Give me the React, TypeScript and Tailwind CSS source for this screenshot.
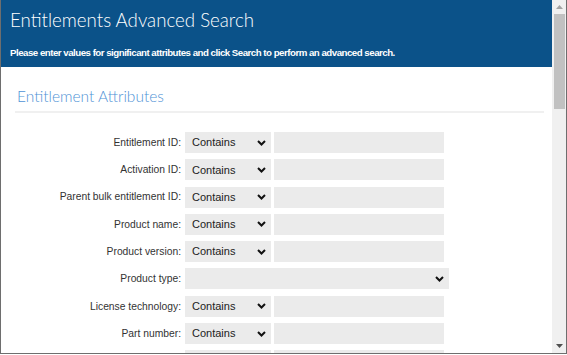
import React from "react"

const rows: { label: string; kind: "match" | "select" }[] = [
  { label: "Entitlement ID:", kind: "match" },
  { label: "Activation ID:", kind: "match" },
  { label: "Parent bulk entitlement ID:", kind: "match" },
  { label: "Product name:", kind: "match" },
  { label: "Product version:", kind: "match" },
  { label: "Product type:", kind: "select" },
  { label: "License technology:", kind: "match" },
  { label: "Part number:", kind: "match" },
]

function Chevron() {
  return (
    <svg width="9" height="6" viewBox="0 0 9 6" className="shrink-0">
      <path d="M1 1 L4.5 4.5 L8 1" fill="none" stroke="#111" strokeWidth="2" />
    </svg>
  )
}

export default function App() {
  return (
    <div className="w-[567px] h-[355px] bg-white overflow-hidden">
      <div className="flex w-[567px] h-[354px] border-l border-r border-b border-[#6e6e6e] font-['Liberation_Sans',Arial,sans-serif]">
        <div className="flex-1 min-w-0 overflow-hidden">
          {/* header */}
          <div className="h-[67px] bg-[#0b5289] text-white px-[9px] pt-[9px]">
            <h1 className="font-['Lato',sans-serif] font-light text-[18.7px] leading-[23px]">
              Entitlements Advanced Search
            </h1>
            <p className="mt-[14px] text-[9.7px] tracking-[-0.5px] font-bold leading-[14px]">
              Please enter values for significant attributes and click Search to perform an advanced search.
            </p>
          </div>

          {/* section */}
          <div className="pl-[14px] pr-[8px] pt-[19px]">
            <h2 className="pl-[2px] font-['Lato',sans-serif] font-light text-[15.5px] leading-[20px] text-[#4f93d6]">
              Entitlement Attributes
            </h2>
            <div className="mt-[5px] h-[2px] bg-[#f0f0f0]" />
          </div>

          <div className="mt-[19px] flex flex-col gap-[6.3px]">
            {rows.map((r) => (
              <div key={r.label} className="flex items-center h-[21px]">
                <div className="w-[184px] pr-[4px] text-right text-[10.3px] text-[#333]">{r.label}</div>
                {r.kind === "match" ? (
                  <>
                    <div className="w-[86px] h-[21px] bg-[#ebebeb] flex items-center justify-between pl-[7px] pr-[5px] text-[11px] text-[#222]">
                      <span>Contains</span>
                      <Chevron />
                    </div>
                    <div className="ml-[3px] w-[170px] h-[21px] bg-[#ebebeb]" />
                  </>
                ) : (
                  <div className="w-[264px] h-[21px] bg-[#ebebeb] flex items-center justify-end pr-[5px]">
                    <Chevron />
                  </div>
                )}
              </div>
            ))}
            {/* next row, cut off by the window edge */}
            <div className="flex h-[21px]">
              <div className="w-[184px]" />
              <div className="w-[86px] bg-[#ebebeb]" />
              <div className="ml-[3px] w-[170px] bg-[#ebebeb]" />
            </div>
          </div>
        </div>

        {/* scrollbar */}
        <div className="w-[14px] shrink-0 bg-[#f0f0f0] flex flex-col items-center">
          <div className="h-[14px] flex items-center justify-center">
            <svg width="7" height="4" viewBox="0 0 7 4">
              <path d="M0 4 L3.5 0 L7 4 Z" fill="#a3a3a3" />
            </svg>
          </div>
          <div className="w-[11px] h-[95px] bg-[#c1c1c1]" />
          <div className="flex-1" />
          <div className="h-[14px] flex items-center justify-center">
            <svg width="7" height="4" viewBox="0 0 7 4">
              <path d="M0 0 L7 0 L3.5 4 Z" fill="#505050" />
            </svg>
          </div>
        </div>
      </div>
    </div>
  )
}
